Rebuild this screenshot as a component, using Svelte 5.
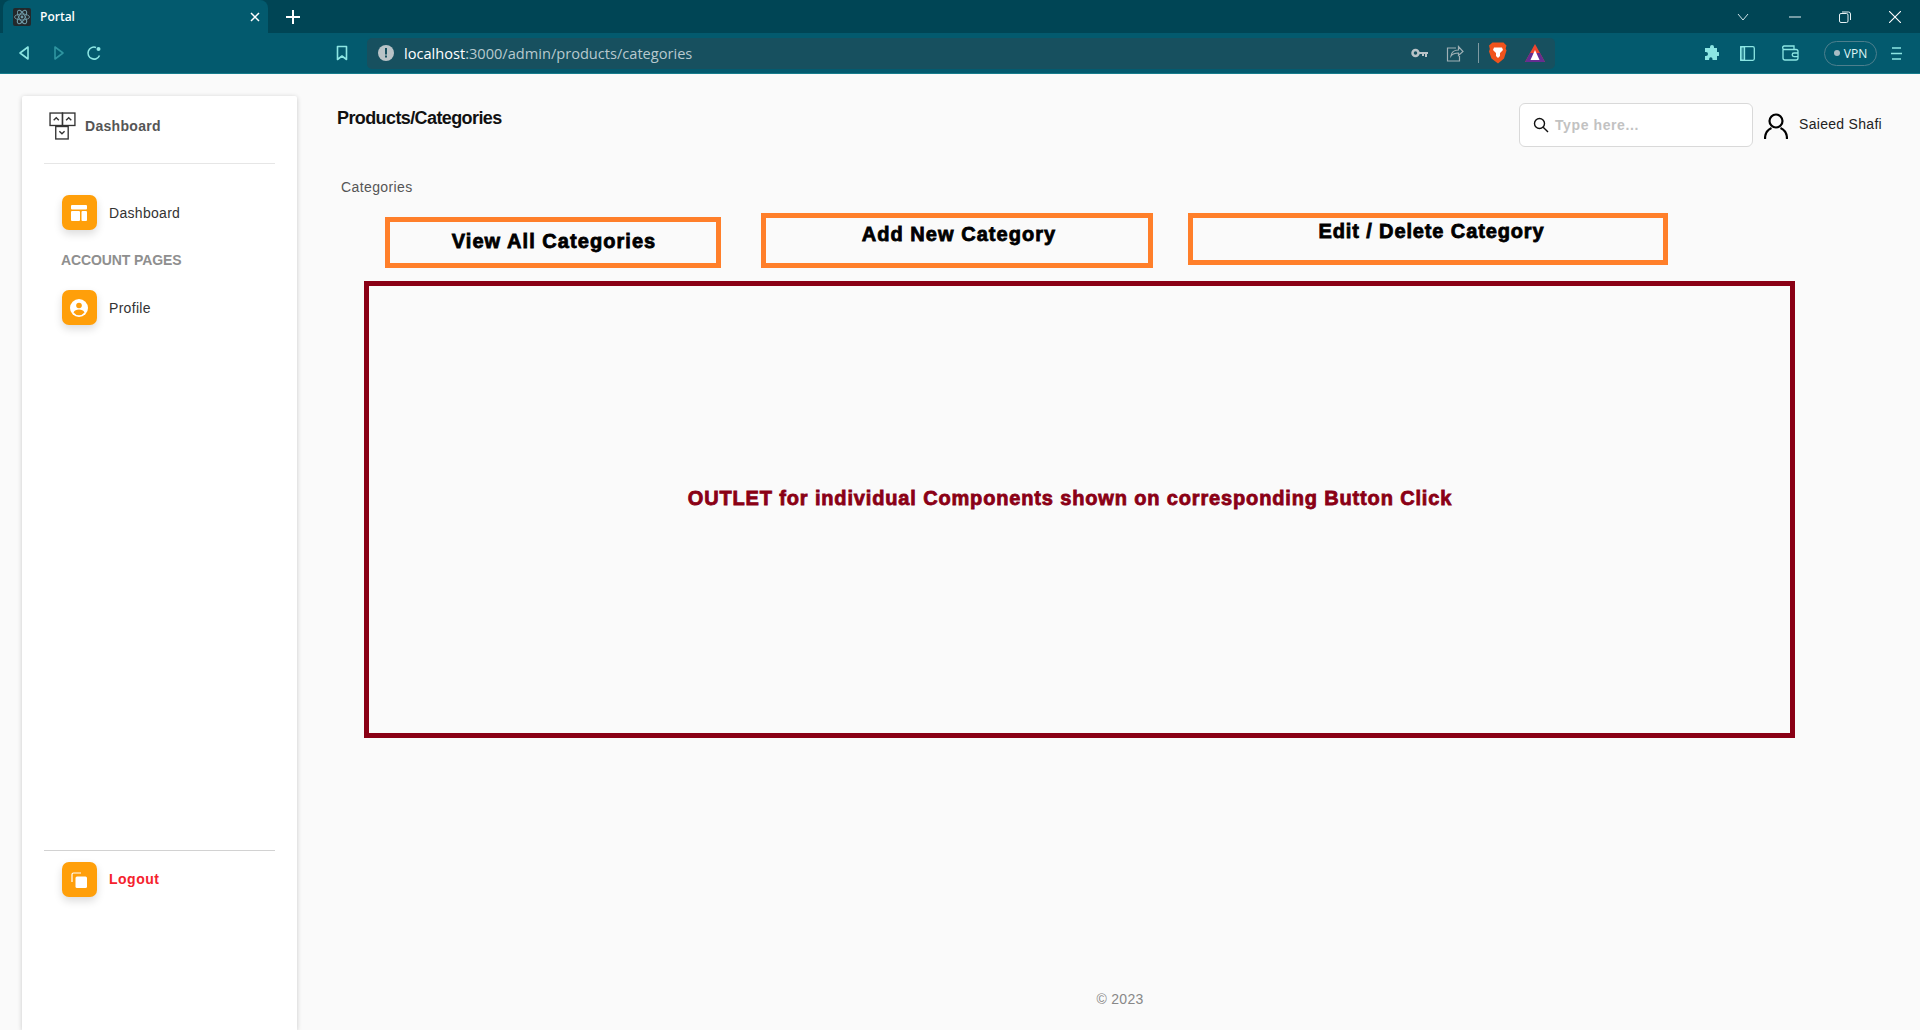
<script>
  const tabs = [
    { label: 'View All Categories', cls: 'view' },
    { label: 'Add New Category', cls: 'add' },
    { label: 'Edit / Delete Category', cls: 'edit' }
  ];
</script>

<div class="shell">
  <div class="tabstrip">
    <div class="tab">
      <span class="favicon">
        <svg width="18" height="18" viewBox="0 0 18 18" fill="none" stroke="#6f9aa6" stroke-width="0.9">
          <ellipse cx="9" cy="9" rx="7.5" ry="3" />
          <ellipse cx="9" cy="9" rx="7.5" ry="3" transform="rotate(60 9 9)" />
          <ellipse cx="9" cy="9" rx="7.5" ry="3" transform="rotate(120 9 9)" />
          <circle cx="9" cy="9" r="1.4" fill="#6f9aa6" stroke="none" />
        </svg>
      </span>
      <span class="tab-title">Portal</span>
      <svg class="tab-close" width="10" height="10" viewBox="0 0 10 10" stroke="#fff" stroke-width="1.5">
        <path d="M1 1l8 8M9 1l-8 8" />
      </svg>
    </div>
    <svg class="newtab" width="14" height="14" viewBox="0 0 14 14" stroke="#fff" stroke-width="2">
      <path d="M7 0v14M0 7h14" />
    </svg>
    <div class="window-controls">
      <svg width="12" height="8" viewBox="0 0 12 8" fill="none" stroke="#cfe3e8"><path d="M1 1l5 6 5-6" /></svg>
      <svg class="ctl-min" width="12" height="2" viewBox="0 0 12 2" stroke="#e8f2f4"><path d="M0 1h12" /></svg>
      <svg class="ctl-max" width="12" height="12" viewBox="0 0 12 12" fill="none" stroke="#e8f2f4">
        <rect x="0.5" y="2.5" width="8.5" height="9" rx="1.5" />
        <path d="M3 1h6.5a2 2 0 0 1 2 2v6" />
      </svg>
      <svg class="ctl-close" width="12" height="12" viewBox="0 0 12 12" stroke="#fff" stroke-width="1.1"><path d="M0 0l12 12M12 0L0 12" /></svg>
    </div>
  </div>

  <div class="toolbar">
    <svg class="nav-back" width="12" height="16" viewBox="0 0 12 16" fill="none" stroke="#8ce6e3" stroke-width="1.6" stroke-linejoin="round">
      <path d="M10 2v12L2 8z" />
    </svg>
    <svg class="nav-forward" width="12" height="16" viewBox="0 0 12 16" fill="none" stroke="#2f95a0" stroke-width="1.6" stroke-linejoin="round">
      <path d="M2 2v12l8-6z" />
    </svg>
    <svg class="nav-reload" width="16" height="16" viewBox="0 0 16 16" fill="none" stroke="#8ce6e3" stroke-width="1.6">
      <path d="M13.5 10.5A6 6 0 1 1 10 2.4" />
      <circle cx="12.5" cy="4" r="2" fill="#8ce6e3" stroke="none" />
    </svg>
    <svg class="nav-bookmark" width="12" height="16" viewBox="0 0 12 16" fill="none" stroke="#8ce6e3" stroke-width="1.6" stroke-linejoin="round">
      <path d="M1.5 1.5h9v13L6 11l-4.500 3.500z" />
    </svg>

    <div class="urlbar">
      <svg width="16" height="16" viewBox="0 0 16 16">
        <circle cx="8" cy="8" r="8" fill="#b9c3c7" />
        <rect x="7" y="3" width="2" height="6.500" fill="#17505f" />
        <rect x="7" y="10.500" width="2" height="2" fill="#17505f" />
      </svg>
      <span class="url"><span class="host">localhost</span>:3000/admin/products/categories</span>
      <svg class="u-key" width="17" height="10" viewBox="0 0 17 10" fill="none">
        <circle cx="4.500" cy="5" r="3" stroke="#b9c3c7" stroke-width="2.500" />
        <path d="M8 4h9v2h-1v3h-2V6h-1v2h-2V6H8z" fill="#b9c3c7" />
      </svg>
      <svg class="u-share" width="18" height="18" viewBox="0 0 18 18" fill="none" stroke="#9fb0b5" stroke-width="1.200">
        <path d="M10 4H1.500v13h12v-5" />
        <path d="M5 12c.5-4 3-6 7.500-6V2.500L17 7.500 12.500 11.500V9C9 9 6.500 10 5 12z" />
      </svg>
      <span class="u-sep"></span>
      <svg class="u-brave" width="18" height="22" viewBox="0 0 18 22">
        <path d="M3.500 0.500h11l3 3-.8 3 .8 2-2.500 8L9 21.500 2.500 16.500 0 9.500l.8-2.500L0 3.500z" fill="#f0531c" />
        <path d="M5 5.500h8l1 2.500-3 3v3l-2 2-2-2v-3L4 8z" fill="#fff" />
      </svg>
      <svg class="u-bat" width="20" height="20" viewBox="0 0 20 20">
        <path d="M10 1l10 18H0z" fill="#f0452f" />
        <path d="M0 19l5-9h10l5 9z" fill="#662d91" />
        <path d="M10 7l4.500 10h-9z" fill="#fff" />
      </svg>
    </div>

    <svg class="t-puzzle" width="16" height="16" viewBox="0 0 16 16" fill="#8ce6e3">
      <path d="M5 3h2V2a2 2 0 0 1 4 0v1h3v4h1a2 2 0 0 1 0 4h-1v4H9.500v-1a1.700 1.700 0 0 0-3.400 0v1H2v-4h1a2 2 0 0 0 0-4H2V3z" />
    </svg>
    <svg class="t-side" width="15" height="15" viewBox="0 0 15 15" fill="none" stroke="#8ce6e3" stroke-width="1.300">
      <rect x="0.700" y="0.700" width="13.600" height="13.600" rx="1.500" />
      <rect x="0.700" y="0.700" width="3.800" height="13.600" fill="#8ce6e3" fill-opacity="0.35" />
    </svg>
    <svg class="t-wallet" width="18" height="16" viewBox="0 0 18 16" fill="none" stroke="#8ce6e3" stroke-width="1.300">
      <path d="M2 4.500V13a2 2 0 0 0 2 2h11a2 2 0 0 0 2-2V6.500a2 2 0 0 0-2-2H3a1.800 1.800 0 0 1 0-3.500h10v3.500" />
      <path d="M17 8h-4a1.800 1.800 0 0 0 0 3.600h4" />
    </svg>
    <div class="vpn"><span class="vpn-dot"></span>VPN</div>
    <svg class="t-menu" width="11" height="13" viewBox="0 0 11 13" stroke="#8ce6e3" stroke-width="1.400">
      <path d="M1 1h9M0 6.500h11M1 12h9" />
    </svg>
  </div>

  <div class="page">
    <aside class="sidebar">
      <div class="brand">
        <svg width="28" height="28" viewBox="0 0 27 27" fill="none" stroke="#333" stroke-width="1.300">
          <rect x="1" y="1" width="12" height="12" />
          <rect x="13" y="1" width="12" height="12" />
          <rect x="6.500" y="14" width="12" height="12" />
          <path d="M4.500 8l2.500-2.500L9.500 8M16.500 8L19 5.500 21.500 8M10 18.500l2.500 2.500 2.500-2.500" />
        </svg>
        <span>Dashboard</span>
      </div>
      <hr class="rule" />
      <nav class="menu">
        <a class="item">
          <span class="icon">
            <svg width="16" height="16" viewBox="0 0 16 16" fill="#fff">
              <rect width="16" height="4.500" rx="1" />
              <rect y="6" width="9" height="10" rx="1" />
              <rect x="10.500" y="6" width="5.500" height="10" rx="1" />
            </svg>
          </span>
          <span>Dashboard</span>
        </a>
        <h6>ACCOUNT PAGES</h6>
        <a class="item">
          <span class="icon">
            <svg width="18" height="18" viewBox="0 0 18 18">
              <circle cx="9" cy="9" r="9" fill="#fff" />
              <circle cx="9" cy="6.500" r="2.800" fill="#ff9f0a" />
              <path d="M3.500 13.500c1-2.200 3-3 5.500-3s4.500.8 5.500 3a7 7 0 0 1-11 0z" fill="#ff9f0a" />
            </svg>
          </span>
          <span>Profile</span>
        </a>
      </nav>
      <div class="logout-block">
        <hr class="rule strong" />
        <a class="item logout">
          <span class="icon">
            <svg width="16" height="16" viewBox="0 0 16 16" fill="none">
              <path d="M1 10V2.500A1.500 1.500 0 0 1 2.500 1H10" stroke="#fff" stroke-width="1.200" />
              <rect x="4.500" y="4.500" width="11.500" height="11.500" rx="1.500" fill="#fff" />
            </svg>
          </span>
          <span>Logout</span>
        </a>
      </div>
    </aside>

    <main class="content">
      <header class="topbar">
        <h1>Products/Categories</h1>
        <label class="search">
          <svg width="16" height="16" viewBox="0 0 16 16" fill="none" stroke="#111" stroke-width="1.400">
            <circle cx="6.500" cy="6.500" r="5" />
            <path d="M10.200 10.200L15 15" />
          </svg>
          <span>Type here...</span>
        </label>
        <svg class="avatar" width="24" height="26" viewBox="0 0 24 26" fill="none" stroke="#000" stroke-width="2.200">
          <circle cx="12" cy="8" r="6.500" />
          <path d="M1 26c0-6 3-9.500 6.500-11M23 26c0-6-3-9.500-6.500-11" />
        </svg>
        <span class="username">Saieed Shafi</span>
      </header>

      <p class="crumb">Categories</p>

      <div class="actions">
        {#each tabs as tab}
          <button class={tab.cls}>{tab.label}</button>
        {/each}
      </div>

      <section class="outlet">OUTLET for individual Components shown on corresponding Button Click</section>

      <footer>© 2023</footer>
    </main>
  </div>
</div>

<style>
  :global(body) {
    margin: 0;
    background: #fafafa;
    font-family: "Liberation Sans", Arial, sans-serif;
  }
  .shell {
    height: 1030px;
    display: flex;
    flex-direction: column;
    overflow: hidden;
  }

  /* browser chrome */
  .tabstrip {
    height: 33px;
    flex-shrink: 0;
    background: #004555;
    display: flex;
    align-items: center;
  }
  .tab {
    width: 265px;
    height: 33px;
    margin-left: 3px;
    padding: 0 0 0 10px;
    box-sizing: border-box;
    background: #035a6e;
    border-radius: 8px 8px 0 0;
    display: flex;
    align-items: center;
  }
  .favicon {
    width: 18px;
    height: 18px;
    background: #23282b;
    border-radius: 2px;
    display: flex;
  }
  .tab-title {
    margin-left: 9px;
    color: #fff;
    font: 600 12px "Open Sans", sans-serif;
  }
  .tab-close {
    margin-left: auto;
    margin-right: 8px;
  }
  .newtab { margin-left: 18px; }
  .window-controls {
    margin-left: auto;
    display: flex;
    align-items: center;
    padding-right: 19px;
  }
  .ctl-min { margin-left: 40px; }
  .ctl-max { margin-left: 38px; }
  .ctl-close { margin-left: 38px; }

  .toolbar {
    height: 41px;
    flex-shrink: 0;
    box-sizing: border-box;
    background: #035a6e;
    border-bottom: 1px solid #167c8c;
    display: flex;
    align-items: center;
  }
  .nav-back { margin-left: 18px; }
  .nav-forward { margin-left: 23px; }
  .nav-reload { margin-left: 21px; }
  .nav-bookmark { margin-left: 234px; }
  .urlbar {
    width: 1188px;
    height: 31px;
    margin-left: 19px;
    padding: 0 10px 0 11px;
    box-sizing: border-box;
    background: #17505f;
    border-radius: 5px;
    display: flex;
    align-items: center;
  }
  .url {
    margin-left: 10px;
    color: #b7c9ce;
    font: 14.6px "Open Sans", sans-serif;
  }
  .host { color: #fff; }
  .u-key { margin-left: auto; }
  .u-share { margin-left: 18px; }
  .u-sep {
    width: 1px;
    height: 20px;
    margin-left: 14px;
    background: #7f9aa2;
  }
  .u-brave { margin-left: 10px; }
  .u-bat { margin-left: 18px; }
  .t-puzzle { margin-left: 148px; }
  .t-side { margin-left: 21px; }
  .t-wallet { margin-left: 26px; }
  .vpn {
    width: 53px;
    height: 25px;
    margin-left: 25px;
    box-sizing: border-box;
    border: 1px solid #4d7f8d;
    border-radius: 13px;
    color: #dff6f6;
    font: 12px "Open Sans", sans-serif;
    display: flex;
    align-items: center;
    justify-content: center;
    gap: 4px;
  }
  .vpn-dot {
    width: 6px;
    height: 6px;
    border-radius: 50%;
    background: #a8bcc4;
  }
  .t-menu { margin-left: 14px; }

  /* app */
  .page {
    flex: 1;
    min-height: 0;
    display: flex;
    background: #fafafa;
    color: #111;
  }
  .sidebar {
    width: 275px;
    flex-shrink: 0;
    margin: 22px 0 0 22px;
    padding: 0 22px;
    box-sizing: border-box;
    background: #fff;
    border-radius: 2px 2px 0 0;
    box-shadow: 0 1px 5px rgba(0, 0, 0, 0.2);
    display: flex;
    flex-direction: column;
  }
  .brand {
    height: 67px;
    display: flex;
    align-items: center;
    gap: 8px;
    padding: 0 0 8px 5px;
    box-sizing: border-box;
    color: #555;
    font-size: 14px;
    font-weight: 700;
    letter-spacing: 0.3px;
  }
  .rule {
    width: 100%;
    height: 1px;
    margin: 0;
    border: 0;
    background: #e6e6e6;
  }
  .rule.strong { background: #d2d2d2; }
  .menu {
    padding: 31px 0 0 18px;
    display: flex;
    flex-direction: column;
  }
  .item {
    display: flex;
    align-items: center;
    gap: 12px;
    color: #333;
    font-size: 14px;
    letter-spacing: 0.3px;
  }
  .icon {
    width: 35px;
    height: 35px;
    background: #ff9f0a;
    border-radius: 7px;
    box-shadow: 0 4px 8px rgba(0, 0, 0, 0.14);
    display: flex;
    align-items: center;
    justify-content: center;
  }
  .icon svg { margin-left: -1px; }
  h6 {
    margin: 23px 0 22px -1px;
    color: #8f8f8f;
    font-size: 14px;
    line-height: 15px;
    font-weight: 700;
    letter-spacing: -0.1px;
  }
  .logout-block {
    margin-top: auto;
    padding-bottom: 133px;
  }
  .logout {
    padding: 11px 0 0 18px;
    color: #f5222d;
    font-weight: 700;
    letter-spacing: 0.5px;
  }
  .logout span:last-child { margin-top: -2px; }

  .content {
    flex: 1;
    min-width: 0;
    padding: 0 38px 0 40px;
    display: flex;
    flex-direction: column;
  }
  .topbar {
    height: 73px;
    padding-top: 29px;
    box-sizing: border-box;
    display: flex;
    align-items: flex-start;
  }
  h1 {
    margin: 0;
    font-size: 18px;
    line-height: 30px;
    font-weight: 700;
    color: #111;
    letter-spacing: -0.6px;
  }
  .search {
    width: 234px;
    height: 44px;
    margin-left: auto;
    box-sizing: border-box;
    padding: 0 0 0 13px;
    background: #fff;
    border: 1px solid #d9d9d9;
    border-radius: 6px;
    display: flex;
    align-items: center;
    gap: 6px;
    color: #c2c2c2;
    font-size: 14px;
    font-weight: 700;
    letter-spacing: 0.6px;
  }
  .avatar { margin: 10px 0 0 11px; }
  .username {
    margin: 13px 0 0 11px;
    font-size: 14px;
    letter-spacing: 0.3px;
    color: #222;
    white-space: nowrap;
  }
  .crumb {
    margin: 31px 0 0 4px;
    font-size: 14px;
    line-height: 18px;
    letter-spacing: 0.4px;
    color: #555;
  }
  .actions {
    margin-top: 17px;
    display: flex;
    align-items: flex-start;
  }
  button {
    box-sizing: border-box;
    padding: 0;
    background: transparent;
    border: 5px solid #ff7f2a;
    color: #000;
    font-family: "Liberation Sans", Arial, sans-serif;
    font-size: 20px;
    font-weight: 700;
    -webkit-text-stroke: 0.8px #000;
    letter-spacing: 1.05px;
    display: flex;
    justify-content: center;
    align-items: flex-start;
  }
  .view {
    width: 336px;
    height: 51px;
    margin: 4px 0 0 48px;
    padding: 8px 0 0 2px;
  }
  .add {
    width: 392px;
    height: 55px;
    margin-left: 40px;
    padding: 5px 0 0 4px;
  }
  .edit {
    width: 480px;
    height: 52px;
    margin-left: 35px;
    padding: 2px 0 0 7px;
    letter-spacing: 0.88px;
  }
  .outlet {
    height: 457px;
    margin: 13px 0 0 27px;
    width: 1431px;
    box-sizing: border-box;
    padding: 0 19px 22px 0;
    border: 5px solid #8a0015;
    color: #8a0015;
    font-size: 20px;
    font-weight: 700;
    -webkit-text-stroke: 0.8px #8a0015;
    letter-spacing: 0.85px;
    display: flex;
    align-items: center;
    justify-content: center;
  }
  footer {
    margin-top: auto;
    padding: 0 0 22px 21px;
    text-align: center;
    font-size: 14px;
    line-height: 18px;
    letter-spacing: 0.3px;
    color: #888;
  }
</style>
